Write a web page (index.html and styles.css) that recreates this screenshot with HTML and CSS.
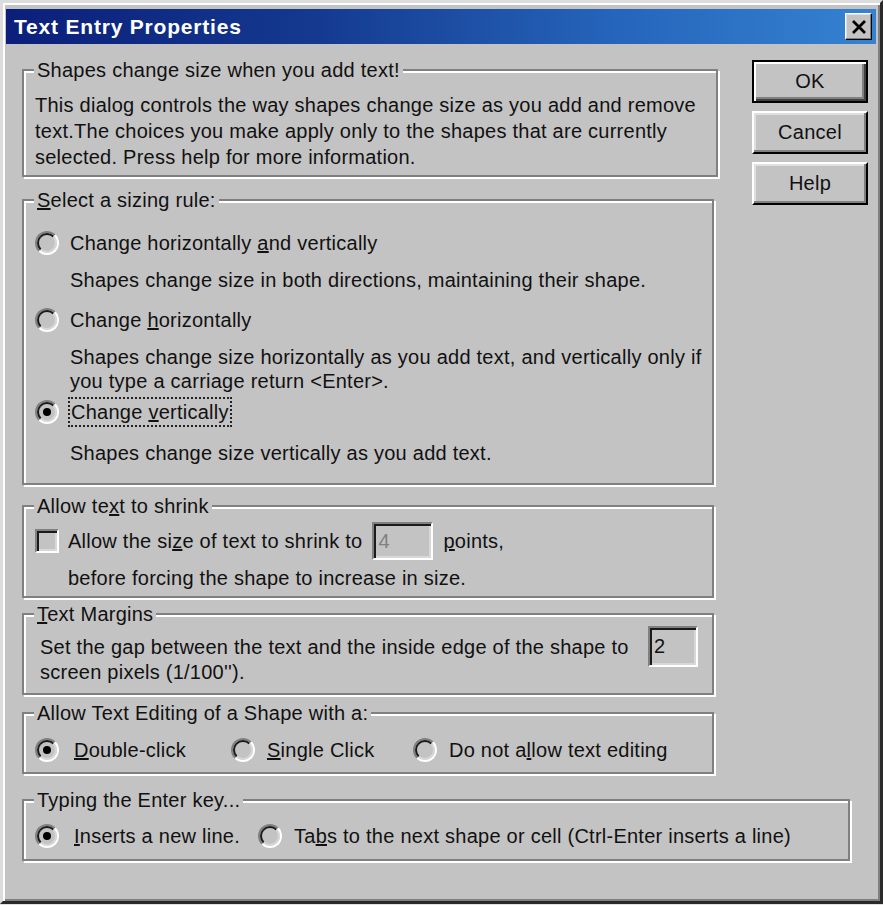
FILE: index.html
```html
<!DOCTYPE html>
<html>

<head>
    <meta charset="utf-8">
    <title>Text Entry Properties</title>
    <link rel="stylesheet" href="styles.css">
</head>

<body>
    <div class="window">
        <div class="titlebar">
            <span class="title">Text Entry Properties</span>
            <button class="close-btn" aria-label="Close">
                <svg width="16" height="14" viewBox="0 0 16 14">
                    <path d="M2 1 L14 13 M14 1 L2 13" stroke="#000" stroke-width="2.8" fill="none"/>
                </svg>
            </button>
        </div>

        <div class="content">
            <div class="top">
                <div class="groups">
                    <div class="group group-intro">
                        <span class="group-label">Shapes change size when you add text!</span>
                        <p class="intro">This dialog controls the way shapes change size as you add and remove<br>text.The choices you make apply only to the shapes that are currently<br>selected. Press help for more information.</p>
                    </div>

                    <div class="group group-rule">
                        <span class="group-label"><u>S</u>elect a sizing rule:</span>
                        <div class="option">
                            <div class="radio-row"><span class="radio"></span><span class="radio-text">Change horizontally <u>a</u>nd vertically</span></div>
                            <p class="desc">Shapes change size in both directions, maintaining their shape.</p>
                        </div>
                        <div class="option option-second">
                            <div class="radio-row"><span class="radio"></span><span class="radio-text">Change <u>h</u>orizontally</span></div>
                            <p class="desc">Shapes change size horizontally as you add text, and vertically only if<br>you type a carriage return &lt;Enter&gt;.</p>
                        </div>
                        <div class="option option-third">
                            <div class="radio-row"><span class="radio checked"></span><span class="radio-text focus">Change <u>v</u>ertically</span></div>
                            <p class="desc">Shapes change size vertically as you add text.</p>
                        </div>
                    </div>

                    <div class="group group-shrink">
                        <span class="group-label">Allow te<u>x</u>t to shrink</span>
                        <div class="shrink-row">
                            <span class="checkbox"></span>
                            <span class="shrink-text">Allow the si<u>z</u>e of text to shrink to</span>
                            <input class="field field-shrink" type="text" value="4" disabled>
                            <span><u>p</u>oints,</span>
                        </div>
                        <p class="shrink-note">before forcing the shape to increase in size.</p>
                    </div>

                    <div class="group group-margins">
                        <span class="group-label"><u>T</u>ext Margins</span>
                        <div class="margins-row">
                            <p class="margins-text">Set the gap between the text and the inside edge of the shape to<br>screen pixels (1/100'').</p>
                            <input class="field field-margin" type="text" value="2">
                        </div>
                    </div>

                    <div class="group group-edit">
                        <span class="group-label">Allow Text Editing of a Shape with a:</span>
                        <div class="choice-row">
                            <div class="choice edit-first"><span class="radio checked"></span><span><u>D</u>ouble-click</span></div>
                            <div class="choice edit-second"><span class="radio"></span><span><u>S</u>ingle Click</span></div>
                            <div class="choice"><span class="radio"></span><span>Do not a<u>l</u>low text editing</span></div>
                        </div>
                    </div>
                </div>

                <div class="buttons">
                    <button class="btn btn-default">OK</button>
                    <button class="btn">Cancel</button>
                    <button class="btn">Help</button>
                </div>
            </div>

            <div class="group group-enter">
                <span class="group-label">Typing the Enter key...</span>
                <div class="choice-row">
                    <div class="choice enter-first"><span class="radio checked"></span><span><u>I</u>nserts a new line.</span></div>
                    <div class="choice"><span class="radio"></span><span>Ta<u>b</u>s to the next shape or cell (Ctrl-Enter inserts a line)</span></div>
                </div>
            </div>
        </div>
    </div>
</body>

</html>
```

FILE: styles.css
```css
body {
    margin: 0;
    padding: 0;
    background-color: #e2e2e2;
    font-family: "Liberation Sans", Arial, sans-serif;
    font-size: 20px;
    letter-spacing: 0.25px;
    color: #111;
}

p {
    margin: 0;
}

.window {
    box-sizing: border-box;
    width: 883px;
    height: 904px;
    padding: 6px 4px 0 3px;
    background-color: #c3c3c3;
    border-top: 3px solid #dcdcdc;
    border-left: 3px solid #dcdcdc;
    border-right: 3px solid #2a2a2a;
    border-bottom: 3px solid #2a2a2a;
    box-shadow: inset 2px 2px 0 #fff, inset -2px -2px 0 #808080;
}

/* title bar */
.titlebar {
    display: flex;
    align-items: center;
    justify-content: space-between;
    height: 35px;
    padding: 0 4px 0 8px;
    background: linear-gradient(to right, #0b1f7a 0%, #14398f 35%, #2565bb 70%, #3582d2 100%);
}

.title {
    color: #fff;
    font-weight: bold;
    font-size: 21px;
    letter-spacing: 0.8px;
}

.close-btn {
    display: flex;
    align-items: center;
    justify-content: center;
    box-sizing: border-box;
    width: 27px;
    height: 27px;
    padding: 0;
    background-color: #c3c3c3;
    border: 1px solid;
    border-color: #fff #000 #000 #fff;
    box-shadow: inset -1px -1px 0 #808080, inset 1px 1px 0 #dfdfdf;
}

/* dialog body */
.content {
    padding: 16px 8px 0 16px;
}

.top {
    display: flex;
    align-items: flex-start;
}

.groups {
    width: 696px;
    padding-top: 9px;
}

.buttons {
    display: flex;
    flex-direction: column;
    gap: 8px;
    margin-left: 34px;
}

.btn {
    box-sizing: border-box;
    width: 116px;
    height: 43px;
    padding: 0;
    font-family: inherit;
    font-size: 20px;
    letter-spacing: 0.25px;
    color: #111;
    background-color: #c3c3c3;
    border: 2px solid;
    border-color: #fff #000 #000 #fff;
    box-shadow: inset -2px -2px 0 #808080, inset 2px 2px 0 #dfdfdf;
}

.btn-default {
    border: 2px solid #000;
    box-shadow: inset 2px 2px 0 #fff, inset -2px -2px 0 #404040, inset -4px -4px 0 #808080;
}

/* etched group boxes */
.group {
    position: relative;
    box-sizing: border-box;
    width: 692px;
    border: 2px solid #808080;
    box-shadow: inset 2px 2px 0 #fff, 2px 2px 0 #fff;
    padding-left: 11px;
    padding-right: 11px;
}

.group-label {
    position: absolute;
    top: -13px;
    left: 10px;
    padding: 0 3px;
    line-height: 24px;
    background-color: #c3c3c3;
    white-space: nowrap;
}

.group-intro {
    width: 696px;
    padding-top: 21px;
    padding-bottom: 5px;
}

.intro {
    line-height: 26px;
    white-space: nowrap;
}

.group-rule {
    margin-top: 22px;
    padding-top: 29px;
    padding-bottom: 18px;
}

.option-second {
    margin-top: 15px;
}

.option-third {
    margin-top: 6px;
}

.radio-row,
.choice {
    display: flex;
    align-items: center;
    height: 26px;
    white-space: nowrap;
}

.radio-text {
    margin-left: 11px;
}

.radio-text.focus {
    margin-left: 9px;
    padding: 0 1px;
    line-height: 26px;
    border: 2px dotted #222;
}

.desc {
    margin-top: 12px;
    margin-left: 35px;
    line-height: 24px;
    white-space: nowrap;
}

.option-third .desc {
    margin-top: 16px;
}

.radio {
    position: relative;
    box-sizing: border-box;
    flex: none;
    width: 24px;
    height: 24px;
    border-radius: 50%;
    border: 2px solid;
    border-color: #808080 #fff #fff #808080;
}

.radio::before {
    content: "";
    position: absolute;
    inset: 0;
    border-radius: 50%;
    border: 2px solid;
    border-color: #1a1a1a #d8d8d8 #d8d8d8 #1a1a1a;
}

.radio.checked::after {
    content: "";
    position: absolute;
    top: 6px;
    left: 6px;
    width: 8px;
    height: 8px;
    border-radius: 50%;
    background-color: #000;
}

.group-shrink {
    margin-top: 20px;
    padding-top: 15px;
    padding-bottom: 6px;
}

.shrink-row {
    display: flex;
    align-items: center;
    height: 38px;
    white-space: nowrap;
}

.checkbox {
    box-sizing: border-box;
    flex: none;
    width: 24px;
    height: 24px;
    border: 2px solid;
    border-color: #808080 #fff #fff #808080;
    box-shadow: inset 2px 2px 0 #1a1a1a, inset -2px -2px 0 #d8d8d8;
}

.shrink-text {
    margin-left: 9px;
}

.field {
    box-sizing: border-box;
    padding: 0 0 0 4px;
    font-family: inherit;
    font-size: 20px;
    color: #111;
    background-color: #c3c3c3;
    border: 2px solid;
    border-color: #808080 #fff #fff #808080;
    box-shadow: inset 2px 2px 0 #1a1a1a, inset -2px -2px 0 #d8d8d8;
    outline: none;
}

.field:disabled {
    color: #808080;
}

.field-shrink {
    width: 61px;
    height: 38px;
    margin: 0 10px 0 10px;
}

.shrink-note {
    margin-top: 6px;
    margin-left: 33px;
    line-height: 24px;
    white-space: nowrap;
}

.group-margins {
    margin-top: 15px;
    padding-top: 11px;
    padding-bottom: 8px;
}

.margins-row {
    display: flex;
    align-items: flex-start;
}

.margins-text {
    width: 598px;
    margin-left: 5px;
    padding-top: 9px;
    line-height: 25px;
    white-space: nowrap;
}

.field-margin {
    width: 50px;
    height: 41px;
    margin-left: 10px;
}

.group-edit {
    margin-top: 17px;
    padding-top: 23px;
    padding-bottom: 9px;
}

.choice-row {
    display: flex;
}

.choice .radio {
    margin-right: 15px;
}

.edit-first {
    width: 196px;
}

.edit-second {
    width: 182px;
}

.edit-second .radio,
.choice:last-child .radio {
    margin-right: 12px;
}

.group-enter {
    width: 828px;
    margin-top: 25px;
    padding-top: 22px;
    padding-bottom: 10px;
}

.enter-first {
    width: 223px;
}
```
